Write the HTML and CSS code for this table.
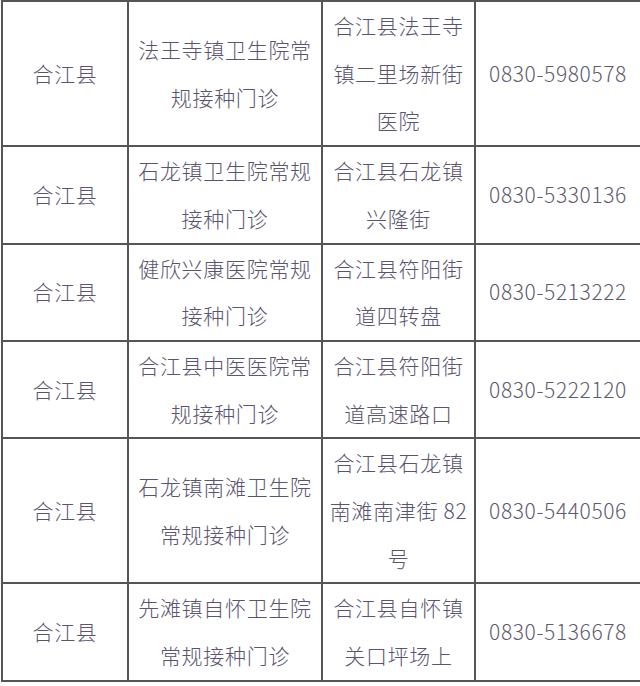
FILE: index.html
```html
<!DOCTYPE html>
<html lang="zh-CN">
<head>
<meta charset="utf-8">
<title>合江县常规接种门诊</title>
<link rel="stylesheet" href="styles.css">
</head>
<body>
<table class="clinics">
  <colgroup>
    <col class="c-county">
    <col class="c-name">
    <col class="c-addr">
    <col class="c-phone">
  </colgroup>
  <tbody>
    <tr>
      <td>合江县</td>
      <td>法王寺镇卫生院常<br>规接种门诊</td>
      <td>合江县法王寺<br>镇二里场新街<br>医院</td>
      <td class="phone">0830-5980578</td>
    </tr>
    <tr>
      <td>合江县</td>
      <td>石龙镇卫生院常规<br>接种门诊</td>
      <td>合江县石龙镇<br>兴隆街</td>
      <td class="phone">0830-5330136</td>
    </tr>
    <tr>
      <td>合江县</td>
      <td>健欣兴康医院常规<br>接种门诊</td>
      <td>合江县符阳街<br>道四转盘</td>
      <td class="phone">0830-5213222</td>
    </tr>
    <tr>
      <td>合江县</td>
      <td>合江县中医医院常<br>规接种门诊</td>
      <td>合江县符阳街<br>道高速路口</td>
      <td class="phone">0830-5222120</td>
    </tr>
    <tr>
      <td>合江县</td>
      <td>石龙镇南滩卫生院<br>常规接种门诊</td>
      <td>合江县石龙镇<br>南滩南津街 82<br>号</td>
      <td class="phone">0830-5440506</td>
    </tr>
    <tr>
      <td>合江县</td>
      <td>先滩镇自怀卫生院<br>常规接种门诊</td>
      <td>合江县自怀镇<br>关口坪场上</td>
      <td class="phone">0830-5136678</td>
    </tr>
  </tbody>
</table>
</body>
</html>
```

FILE: styles.css
```css
html, body {
  margin: 0;
  padding: 0;
  background: #ffffff;
}

.clinics {
  border-collapse: collapse;
  table-layout: fixed;
  width: 639px;
  margin: 0 0 0 1px;
  font-family: "Noto Sans CJK SC", "Noto Sans", sans-serif;
  font-weight: 300;
  font-size: 21px;
  color: #59546f;
}

.c-county { width: 126px; }
.c-name { width: 194px; }
.c-addr { width: 153px; }
.c-phone { width: 166px; }

.clinics td {
  border: 2px solid #555555;
  padding: 0;
  text-align: center;
  vertical-align: middle;
  line-height: 47.7px;
  letter-spacing: 0.7px;
  white-space: nowrap;
}

.clinics td.phone {
  letter-spacing: 0.6px;
  color: #5f5b70;
}
```
